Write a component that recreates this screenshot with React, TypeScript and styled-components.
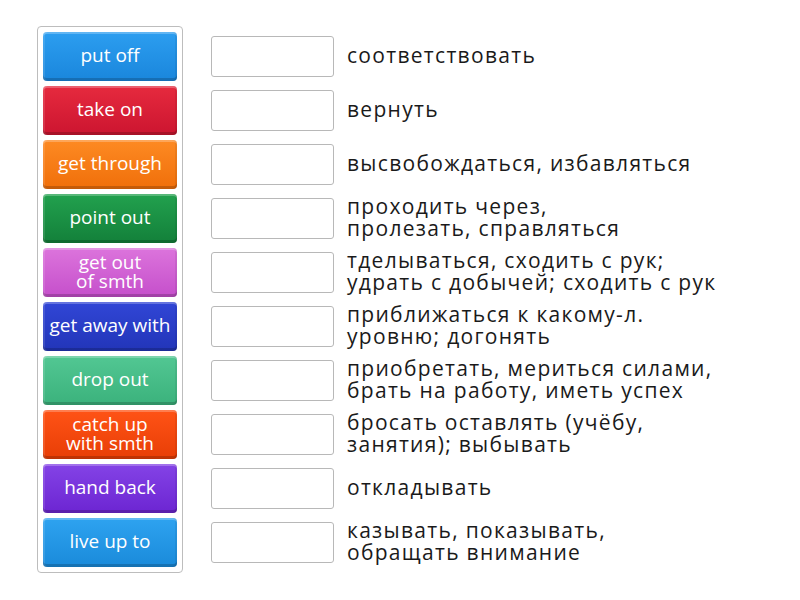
import React from "react";
import styled, { createGlobalStyle } from "styled-components";

const Global = createGlobalStyle`
  html, body { margin: 0; padding: 0; background: #ffffff; }
  * { box-sizing: border-box; }
`;

const Page = styled.div`
  display: flex;
  align-items: flex-start;
  padding: 26px 0 0 37px;
`;

const Panel = styled.div`
  width: 146px;
  border: 1px solid #bdbdbd;
  border-radius: 4px;
  padding: 5px;
  display: flex;
  flex-direction: column;
  gap: 5px;
`;

const Tile = styled.div<{ $c: string; $d: string }>`
  height: 49px;
  border-radius: 4px;
  background: linear-gradient(180deg, ${(p) => p.$c} 0%, ${(p) => p.$d} 100%);
  box-shadow: inset 0 2px 0 rgba(255, 255, 255, 0.25), inset 0 -3px 0 rgba(0, 0, 0, 0.18),
    inset 2px 0 0 rgba(255, 255, 255, 0.12), inset -2px 0 0 rgba(0, 0, 0, 0.06);
  display: flex;
  align-items: center;
  justify-content: center;
  text-align: center;
  color: #ffffff;
  font-family: "Open Sans", Lato, sans-serif;
  font-size: 19px;
  font-weight: 500;
  line-height: 19px;
  padding: 0 1px 2px;
`;

const Targets = styled.div`
  display: flex;
  flex-direction: column;
  gap: 5px;
  padding-top: 6px;
  margin-left: 28px;
`;

const Row = styled.div`
  height: 49px;
  display: flex;
  align-items: center;
`;

const Slot = styled.div`
  width: 123px;
  height: 41px;
  flex: none;
  border: 1px solid #b8b8b8;
  border-radius: 3px;
  background: #fff;
`;

const Label = styled.div`
  margin-left: 13px;
  padding-bottom: 3px;
  font-family: "Open Sans", Roboto, sans-serif;
  font-size: 21px;
  line-height: 22px;
  letter-spacing: 1.3px;
  color: #1a1a1a;
  white-space: pre-line;
`;

const tiles: [string, string, string][] = [
  ["put off", "#2c9ef0", "#1a86dc"],
  ["take on", "#e62a3e", "#cc1530"],
  ["get through", "#fd8a23", "#f06f0a"],
  ["point out", "#22a14e", "#13803a"],
  ["get out\nof smth", "#dc74dc", "#c54fcb"],
  ["get away with", "#3146d6", "#2235b8"],
  ["drop out", "#52c793", "#3bb27c"],
  ["catch up\nwith smth", "#ff5316", "#e83e06"],
  ["hand back", "#8443e6", "#6c25d2"],
  ["live up to", "#2ea3f0", "#1a8ada"],
];

const labels = [
  "соответствовать",
  "вернуть",
  "высвобождаться, избавляться",
  "проходить через,\nпролезать, справляться",
  "тделываться, сходить с рук;\nудрать с добычей; сходить с рук",
  "приближаться к какому-л.\nуровню; догонять",
  "приобретать, мериться силами,\nбрать на работу, иметь успех",
  "бросать оставлять (учёбу,\nзанятия); выбывать",
  "откладывать",
  "казывать, показывать,\nобращать внимание",
];

const TileText = styled.span`
  white-space: pre-line;
`;

export default function App() {
  return (
    <>
      <Global />
      <Page>
        <Panel>
          {tiles.map(([t, c, d]) => (
            <Tile key={t} $c={c} $d={d}>
              <TileText>{t}</TileText>
            </Tile>
          ))}
        </Panel>
        <Targets>
          {labels.map((l) => (
            <Row key={l}>
              <Slot />
              <Label>{l}</Label>
            </Row>
          ))}
        </Targets>
      </Page>
    </>
  );
}
